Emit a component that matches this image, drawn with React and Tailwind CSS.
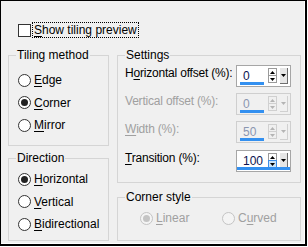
import React from 'react';

const font = { fontFamily: '"Segoe UI", "Liberation Sans", Arial, sans-serif' };

function Mn({ text, at }) {
    // mnemonic: underline one letter
    if (at < 0) return <>{text}</>;
    return (
        <>
            {text.slice(0, at)}
            <span className="underline underline-offset-2">{text[at]}</span>
            {text.slice(at + 1)}
        </>
    );
}

function Radio({ label, at, checked, disabled }) {
    return (
        <div className="flex items-center h-[22.5px]">
            <div
                className={`w-[13px] h-[13px] rounded-full border flex items-center justify-center ${
                    disabled ? 'border-[#c4c4c4] bg-[#f4f4f4]' : 'border-[#333333] bg-white'
                }`}
            >
                {checked && (
                    <div className={`w-[7px] h-[7px] rounded-full ${disabled ? 'bg-[#c4c4c4]' : 'bg-[#222222]'}`}></div>
                )}
            </div>
            <span className={`ml-[3px] text-[12px] leading-[14px] whitespace-nowrap ${disabled ? 'text-[#a0a0a0]' : 'text-black'}`}>
                <Mn text={label} at={at} />
            </span>
        </div>
    );
}

function Group({ title, className, children }) {
    return (
        <div className={`relative border border-[#d5d5d5] ${className}`}>
            <span className="absolute -top-[8px] left-[7px] px-[1px] bg-[#f0f0f0] text-[12px] leading-[14px] text-black whitespace-nowrap">
                {title}
            </span>
            {children}
        </div>
    );
}

function Tri({ down, color }) {
    return (
        <svg width="5" height="3" viewBox="0 0 5 3">
            <path d={down ? 'M0 0H5L2.5 3Z' : 'M0 3H5L2.5 0Z'} fill={color} />
        </svg>
    );
}

function SpinBox({ value, disabled, full, hot }) {
    const tri = disabled ? '#b4b4b4' : '#000000';
    const edge = disabled ? 'border-[#d0d0d0]' : 'border-[#9a9a9a]';
    return (
        <div
            className={`relative shrink-0 flex h-[22px] w-[55px] border ${
                disabled ? 'border-[#cfcfcf] bg-[#f0f0f0]' : 'border-[#a6a6a6] bg-white'
            }`}
        >
            <div
                className={`w-[31px] pl-[6px] pt-[3px] text-[12px] leading-[14px] ${
                    disabled ? 'text-[#8a96b0]' : 'text-[#0c1450]'
                }`}
            >
                {value}
            </div>
            <div className="flex flex-col mt-[2px] w-[9px]">
                <div className={`h-[8px] border ${edge} flex items-center justify-center`}>
                    <Tri color={tri} />
                </div>
                <div
                    className={`h-[8px] -mt-[1px] border flex items-center justify-center ${
                        hot ? 'border-[#3c8ce6] bg-[#cce4f7]' : edge
                    }`}
                >
                    <Tri down color={tri} />
                </div>
            </div>
            <div
                className={`ml-[3px] mt-[2px] w-[8px] h-[16px] border-r border-b flex items-center justify-center ${
                    disabled ? 'border-[#d0d0d0] bg-[#f0f0f0]' : 'border-[#6e6e6e] bg-[#e6e6e6]'
                }`}
            >
                <Tri down color={tri} />
            </div>
            <div
                className={`absolute bottom-[1px] h-[3px] bg-[#3390f0] ${
                    full ? 'left-0 right-0' : 'left-[3px] w-[24px]'
                }`}
            ></div>
        </div>
    );
}

function Row({ label, at, value, disabled, full, hot }) {
    return (
        <div className="flex justify-between items-start h-[22px]">
            <span
                className={`mt-[1px] text-[12px] leading-[14px] whitespace-nowrap tracking-[-0.2px] ${
                    disabled ? 'text-[#a0a0a0]' : 'text-black'
                }`}
            >
                <Mn text={label} at={at} />
            </span>
            <SpinBox value={value} disabled={disabled} full={full} hot={hot} />
        </div>
    );
}

export default function App() {
    return (
        <div className="w-[308px] h-[247px] bg-white" style={font}>
            <div className="w-[307px] h-[246px] border-t border-l border-r-2 border-b-2 border-black bg-[#f0f0f0]">
                <div className="h-full border-r border-b border-white">
                    <div className="pt-[22px] pl-[17px] flex items-center">
                        <div className="w-[13px] h-[13px] border border-[#333333] bg-white"></div>
                        <span className="ml-[2px] px-[1px] text-[12px] leading-[14px] text-black outline-1 outline-dotted outline-black whitespace-nowrap">
                            <Mn text="Show tiling preview" at={0} />
                        </span>
                    </div>

                    <div className="mt-[18px] pl-[7px] flex gap-[8px]">
                        <div className="w-[101px] flex flex-col gap-[12px]">
                            <Group title="Tiling method" className="h-[91px] pt-[13px] pl-[9px]">
                                <Radio label="Edge" at={0} />
                                <Radio label="Corner" at={0} checked />
                                <Radio label="Mirror" at={0} />
                            </Group>
                            <Group title="Direction" className="h-[83px] pt-[9px] pl-[9px]">
                                <Radio label="Horizontal" at={0} checked />
                                <Radio label="Vertical" at={0} />
                                <Radio label="Bidirectional" at={0} />
                            </Group>
                        </div>

                        <div className="w-[184px] flex flex-col gap-[14px]">
                            <Group title="Settings" className="h-[128px] pt-[9px] pl-[7px] pr-[9px]">
                                <div className="flex flex-col gap-[6px]">
                                    <Row label="Horizontal offset (%):" at={1} value="0" />
                                    <Row label="Vertical offset (%):" at={-1} value="0" disabled />
                                    <Row label="Width (%):" at={0} value="50" disabled />
                                    <div className="mt-[1px]">
                                        <Row label="Transition (%):" at={0} value="100" full hot />
                                    </div>
                                </div>
                            </Group>
                            <Group title="Corner style" className="h-[44px] pt-[9px] pl-[22px]">
                                <div className="flex">
                                    <div className="w-[82px]">
                                        <Radio label="Linear" at={0} checked disabled />
                                    </div>
                                    <Radio label="Curved" at={1} disabled />
                                </div>
                            </Group>
                        </div>
                    </div>
                </div>
            </div>
        </div>
    );
}
